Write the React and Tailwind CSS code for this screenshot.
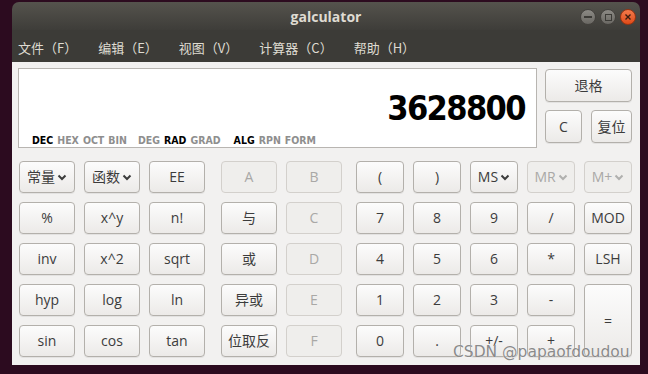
import React from "react";

function Chevron({ dim }) {
  return (
    <svg width="10" height="7" viewBox="0 0 10 7" className="ml-[2px]">
      <polyline
        points="1.5,1.5 5,5 8.5,1.5"
        fill="none"
        stroke={dim ? "#b0b0ae" : "#3c3c3c"}
        strokeWidth="2"
      />
    </svg>
  );
}

function Btn({ label, dim, chevron, className = "" }) {
  const base =
    "flex items-center justify-center rounded-[4px] border text-[14px] leading-none font-['Open_Sans','Noto_Sans_CJK_SC',sans-serif]";
  const on =
    "border-[#b3b0ab] bg-gradient-to-b from-[#fcfcfc] to-[#eceae8] text-[#3c3c3c] shadow-[0_1px_0_rgba(0,0,0,0.06)]";
  const off = "border-[#d3d0cc] bg-[#efeeec] text-[#a9a8a6]";
  return (
    <div className={`${base} ${dim ? off : on} ${className}`}>
      <span>{label}</span>
      {chevron && <Chevron dim={dim} />}
    </div>
  );
}

export default function App() {
  const left = [
    [{ l: "常量", c: true }, { l: "函数", c: true }, { l: "EE" }],
    [{ l: "%" }, { l: "x^y" }, { l: "n!" }],
    [{ l: "inv" }, { l: "x^2" }, { l: "sqrt" }],
    [{ l: "hyp" }, { l: "log" }, { l: "ln" }],
    [{ l: "sin" }, { l: "cos" }, { l: "tan" }],
  ];
  const mid = [
    [{ l: "A", d: true }, { l: "B", d: true }],
    [{ l: "与" }, { l: "C", d: true }],
    [{ l: "或" }, { l: "D", d: true }],
    [{ l: "异或" }, { l: "E", d: true }],
    [{ l: "位取反" }, { l: "F", d: true }],
  ];

  return (
    <div className="relative w-[648px] h-[374px] bg-[#2c0b1f] pl-[12px] pr-[8px] pt-[2px] overflow-hidden">
      <div className="w-[628px] flex flex-col rounded-t-[7px] overflow-hidden">
        {/* title bar */}
        <div className="relative h-[28px] bg-gradient-to-b from-[#55534d] to-[#3e3d39] flex items-center justify-center">
          <span className="text-[14px] font-bold text-[#dfdbd2] font-['Open_Sans',sans-serif] leading-none mt-[1px]">
            galculator
          </span>
          <div className="absolute right-[4px] top-[7px] flex gap-[4px]">
            <div className="w-[16px] h-[16px] rounded-full bg-gradient-to-b from-[#8c8a85] to-[#6a6863] border border-[#44423e] flex items-center justify-center">
              <div className="w-[8px] h-[2px] bg-[#3c3b37]" />
            </div>
            <div className="w-[16px] h-[16px] rounded-full bg-gradient-to-b from-[#8c8a85] to-[#6a6863] border border-[#44423e] flex items-center justify-center">
              <div className="w-[7px] h-[7px] border-[1.5px] border-[#3c3b37]" />
            </div>
            <div className="w-[16px] h-[16px] rounded-full bg-gradient-to-b from-[#f47a4a] to-[#df4a16] border border-[#9a3412] flex items-center justify-center">
              <svg width="8" height="8" viewBox="0 0 8 8">
                <path d="M1.5 1.5 L6.5 6.5 M6.5 1.5 L1.5 6.5" stroke="#3c1d10" strokeWidth="1.4" />
              </svg>
            </div>
          </div>
        </div>
        {/* menu bar */}
        <div className="h-[32px] bg-[#3c3b37] flex items-center pl-[6px] pt-[3px] gap-[21px] text-[13px] text-[#dfdbd2] font-['Noto_Sans_CJK_SC',sans-serif] leading-none">
          <span>文件（F）</span>
          <span>编辑（E）</span>
          <span>视图（V）</span>
          <span>计算器（C）</span>
          <span>帮助（H）</span>
        </div>
        {/* content */}
        <div className="h-[303px] bg-[#f2f1f0] pl-[6px] pt-[6px] flex flex-col">
          <div className="flex">
            <div className="w-[519px] h-[80px] bg-white border border-[#b8b5b1] flex flex-col justify-end pr-[11px] pl-[13px] pb-[2px]">
              <div className="text-right text-[34px] leading-none font-bold text-black font-['DejaVu_Sans_Condensed','DejaVu_Sans',sans-serif] mb-[10px] tracking-[-1.6px]">
                3628800
              </div>
              <div className="flex text-[10.5px] font-bold leading-none font-['DejaVu_Sans_Condensed','DejaVu_Sans',sans-serif] text-[#8e8e8e]">
                <span className="text-black">DEC</span>
                <span className="ml-[4px]">HEX</span>
                <span className="ml-[4px]">OCT</span>
                <span className="ml-[4px]">BIN</span>
                <span className="ml-[11px]">DEG</span>
                <span className="ml-[4px] text-black">RAD</span>
                <span className="ml-[4px]">GRAD</span>
                <span className="ml-[13px] text-black">ALG</span>
                <span className="ml-[4px]">RPN</span>
                <span className="ml-[4px]">FORM</span>
              </div>
            </div>
            <div className="ml-[8px] mt-[1px] w-[87px] flex flex-col gap-[8px]">
              <Btn label="退格" className="h-[33px]" />
              <div className="flex gap-[9px]">
                <Btn label="C" className="w-[37px] h-[33px]" />
                <Btn label="复位" className="w-[41px] h-[33px]" />
              </div>
            </div>
          </div>
          {/* keypad */}
          <div className="flex mt-[13px] ml-[1px]">
            <div className="grid grid-cols-[56px_56px_56px] auto-rows-[32px] gap-x-[9px] gap-y-[9px]">
              {left.flat().map((b, i) => (
                <Btn key={i} label={b.l} chevron={b.c} />
              ))}
            </div>
            <div className="ml-[16px] grid grid-cols-[56px_56px] auto-rows-[32px] gap-x-[9px] gap-y-[9px]">
              {mid.flat().map((b, i) => (
                <Btn key={i} label={b.l} dim={b.d} />
              ))}
            </div>
            <div className="ml-[14px] grid grid-cols-[48px_48px_48px_48px_48px] grid-rows-[32px_32px_32px_32px_32px] gap-x-[9px] gap-y-[9px]">
              <Btn label="(" />
              <Btn label=")" />
              <Btn label="MS" chevron />
              <Btn label="MR" chevron dim />
              <Btn label="M+" chevron dim />
              <Btn label="7" />
              <Btn label="8" />
              <Btn label="9" />
              <Btn label="/" />
              <Btn label="MOD" />
              <Btn label="4" />
              <Btn label="5" />
              <Btn label="6" />
              <Btn label="*" />
              <Btn label="LSH" />
              <Btn label="1" />
              <Btn label="2" />
              <Btn label="3" />
              <Btn label="-" />
              <Btn label="=" className="row-span-2" />
              <Btn label="0" />
              <Btn label="." />
              <Btn label="+/-" />
              <Btn label="+" />
            </div>
          </div>
        </div>
      </div>
      <div className="absolute left-[453px] top-[345px] text-[15.5px] leading-none text-[#8a8a8a] font-['DejaVu_Sans',sans-serif] [text-shadow:0_0_1px_#ffffff]">
        CSDN @papaofdoudou
      </div>
    </div>
  );
}
